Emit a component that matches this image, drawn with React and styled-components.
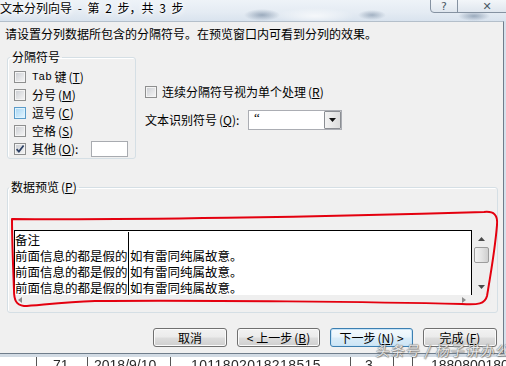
import React from 'react';
import styled, { createGlobalStyle, css } from 'styled-components';

const GlobalStyle = createGlobalStyle`
  html, body { margin: 0; padding: 0; width: 506px; height: 366px; overflow: hidden; }
  body {
    font-family: "Noto Sans CJK SC", "Liberation Sans", sans-serif;
    font-size: 12px;
    color: #000;
    background: #dfe7ef;
  }
`;

const Page = styled.div`
  position: relative;
  width: 506px;
  height: 366px;
  overflow: hidden;
  display: flex;
  flex-direction: column;
  background: linear-gradient(90deg, #e3eaf1, #d6e1ec);
`;

const TitleBar = styled.div`
  position: relative;
  flex: none;
  height: 21px;
  background:
    radial-gradient(ellipse 18px 6px at 262px 15px, rgba(70, 95, 125, 0.45), transparent),
    radial-gradient(ellipse 14px 5px at 372px 15px, rgba(70, 95, 125, 0.4), transparent),
    radial-gradient(ellipse 16px 5px at 474px 16px, rgba(70, 95, 125, 0.45), transparent),
    radial-gradient(ellipse 40px 8px at 315px 16px, rgba(255, 255, 255, 0.7), transparent),
    linear-gradient(180deg, #eef3f8 0%, #e4ebf3 60%, #d9e3ee 100%);
`;

const TitleText = styled.div`
  font-size: 12px;
  line-height: 16px;
  word-spacing: 3px;
  white-space: nowrap;
  text-shadow: 0 0 3px #fff, 0 0 6px #fff, 0 0 8px #fff;
`;

const CaptionBox = styled.div`
  position: absolute;
  left: 430px;
  top: -2px;
  width: 84px;
  height: 13px;
  display: flex;
  border: 1px solid #8592a1;
  border-radius: 0 0 4px 4px;
  background: linear-gradient(#f4f7fa, #dfe6ee);
  overflow: hidden;
`;

const CaptionBtn = styled.div`
  width: ${p => p.$w}px;
  flex: none;
  display: flex;
  justify-content: center;
  align-items: flex-end;
  font-family: "DejaVu Sans", sans-serif;
  font-size: 11px;
  line-height: 11px;
  color: #4c5966;
  & + & { border-left: 1px solid #8592a1; }
`;

const Client = styled.div`
  flex: none;
  width: 503px;
  background: #f0f0f0;
  border-top: 1px solid #b4bfca;
  border-right: 1px solid #6f7d8b;
  border-bottom: 1px solid #6f7d8b;
  display: flex;
  flex-direction: column;
  padding-bottom: 6px;
`;

const Instruction = styled.div`
  margin: 5px 0 0 5px;
  line-height: 14px;
  white-space: nowrap;
`;

const TopRow = styled.div`
  display: flex;
  margin-top: 9px;
  padding-left: 7px;
`;

const GroupBox = styled.fieldset`
  box-sizing: border-box;
  width: ${p => p.$w}px;
  margin: 0;
  padding: 0;
  min-width: 0;
  border: 1px solid #d5dfe5;
  border-radius: 3px;
  box-shadow: inset 1px 1px 0 #fff;
`;

const Legend = styled.legend`
  margin-left: ${p => p.$ml || 2}px;
  padding: 0 2px;
  font-size: 12px;
  line-height: 14px;
`;

const GroupInner = styled.div`
  padding: 4px 7px 0 6px;
`;

const CheckRow = styled.div`
  height: 18px;
  display: flex;
  align-items: center;
  white-space: nowrap;
  line-height: 14px;
`;

const Box = styled.span`
  flex: none;
  position: relative;
  box-sizing: border-box;
  width: 12px;
  height: 12px;
  margin-right: ${p => p.$gap ?? 6}px;
  border: 1px solid #8e8f8f;
  box-shadow: inset 0 0 0 1px #f4f4f4;
  background: linear-gradient(135deg, #c9ccd1 0%, #e3e4e6 55%, #f6f6f6 100%);
  ${p => p.$hover && css`
    border-color: #5b9bc9;
    box-shadow: inset 0 0 0 1px #def3fd;
    background: linear-gradient(135deg, #a6d4f3 0%, #c8e6f9 55%, #e8f6fe 100%);
  `}
  svg { position: absolute; left: 0; top: 0; }
`;

const Mono = styled.span`
  font-family: "Liberation Mono", monospace;
  font-size: 11px;
`;

const Hot = styled.span`
  margin-left: 2px;
  u { text-decoration: underline; text-underline-offset: 1px; }
`;

const OtherInput = styled.span`
  margin-left: auto;
  box-sizing: border-box;
  width: 37px;
  height: 16px;
  background: #fff;
  border: 1px solid #a8abb0;
`;

const RightCol = styled.div`
  margin-left: 9px;
  padding-top: 33px;
  display: flex;
  flex-direction: column;
`;

const ComboRow = styled.div`
  margin-top: 9px;
  height: 20px;
  display: flex;
  align-items: center;
  white-space: nowrap;
`;

const ComboLabel = styled.span`
  width: 103px;
  flex: none;
  line-height: 14px;
`;

const Combo = styled.div`
  box-sizing: border-box;
  width: 94px;
  height: 20px;
  display: flex;
  border: 1px solid #abadb3;
  background: #fff;
`;

const ComboText = styled.span`
  flex: 1;
  padding-left: 5px;
  font-family: "Liberation Serif", serif;
  font-size: 13px;
  line-height: 14px;
`;

const ComboButton = styled.span`
  box-sizing: border-box;
  width: 17px;
  display: flex;
  align-items: center;
  justify-content: center;
  border: 1px solid #8b8e93;
  border-radius: 1px;
  background: linear-gradient(90deg, #f3f3f3, #dcdcdc);
`;

const PreviewGroupWrap = styled.div`
  margin: 21px 0 0 7px;
`;

const PreviewInner = styled.div`
  padding: 36px 6px 8px 6px;
`;

const PreviewBox = styled.div`
  display: grid;
  grid-template-columns: 458px 19px;
  grid-template-rows: 65px 9px;
`;

const DataArea = styled.div`
  box-sizing: border-box;
  background: #fff;
  border: 1px solid #000;
  border-bottom: none;
  overflow: hidden;
  display: grid;
  grid-template-columns: 114px 1fr;
  grid-auto-rows: 16px;
  padding-top: 1px;
  align-content: start;
`;

const Cell = styled.div`
  font-size: 12.5px;
  line-height: 16px;
  white-space: nowrap;
  overflow: hidden;
  ${p => p.$first ? css`border-right: 1px solid #000;` : css`padding-left: 1px;`}
`;

const VScroll = styled.div`
  display: flex;
  flex-direction: column;
  align-items: center;
  background: #eeeeee;
`;

const ArrowCell = styled.div`
  height: 17px;
  flex: none;
  display: flex;
  align-items: center;
  justify-content: center;
`;

const Thumb = styled.div`
  box-sizing: border-box;
  width: 15px;
  height: 16px;
  border: 1px solid #9c9c9c;
  border-radius: 2px;
  background: linear-gradient(90deg, #f4f4f4, #e2e2e2 55%, #cfcfcf);
`;

const Spacer = styled.div`flex: 1;`;

const HScroll = styled.div`
  grid-column: 1 / span 2;
  display: flex;
  justify-content: space-between;
  align-items: flex-start;
  padding: 2px 25px 0 4px;
  background: #efefef;
`;

const ButtonRow = styled.div`
  margin-top: 15px;
  padding-right: 6px;
  display: flex;
  justify-content: flex-end;
  gap: 10px;
`;

const Button = styled.div`
  box-sizing: border-box;
  width: ${p => p.$w}px;
  height: 19px;
  display: flex;
  align-items: center;
  justify-content: center;
  white-space: nowrap;
  line-height: 14px;
  border: 1px solid #707070;
  border-radius: 3px;
  background: linear-gradient(#f2f2f2 0%, #ebebeb 48%, #dddddd 52%, #cfcfcf 100%);
  box-shadow: inset 0 0 0 1px #fbfbfb;
  ${p => p.$focus && css`
    border-color: #3c7fb1;
    background: linear-gradient(#f4fafe 0%, #e9f4fb 48%, #d9ecf8 52%, #cde5f5 100%);
    box-shadow: inset 0 0 0 1px #c6e3f7;
  `}
`;

const BottomStrip = styled.div`
  flex: 1;
  padding-top: 3px;
  background: linear-gradient(#d2dbe4 0 3px, #ffffff 3px);
  overflow: hidden;
`;

const SheetRow = styled.div`
  display: grid;
  grid-template-columns: 36px 51px 83px 180px 43px 19px 1fr;
  height: 20px;
  font-family: "Liberation Sans", sans-serif;
  font-size: 14px;
  line-height: 14px;
  color: #2b2b2b;
  filter: blur(0.4px);
`;

const SheetCell = styled.div`
  border-left: ${p => p.$noline ? 'none' : '1px solid #555'};
  padding: 1px 0 0 ${p => p.$pl || 0}px;
  white-space: nowrap;
  overflow: hidden;
  letter-spacing: ${p => p.$ls || 0}px;
`;

const Watermark = styled.div`
  position: absolute;
  left: 376px;
  top: 341px;
  font-size: 14px;
  line-height: 18px;
  letter-spacing: 1px;
  white-space: nowrap;
  color: rgba(255, 255, 255, 0.85);
  text-shadow: 0 0 1px #6d6d6d, 0 0 1px #6d6d6d, 1px 1px 1px rgba(80, 80, 80, 0.6);
  transform: skewX(-8deg);
  pointer-events: none;
`;

const Annotation = styled.svg`
  position: absolute;
  left: 0;
  top: 0;
  pointer-events: none;
`;

const Check = () => (
  <svg width="10" height="10" viewBox="0 0 10 10">
    <path d="M1.6 5.2 L3.9 7.6 L8.6 1.6" fill="none" stroke="#2b3f63" strokeWidth="1.7" />
  </svg>
);

const Tri = ({ dir = 'down', color = '#333', w = 7, h = 4 }) => {
  let d;
  if (dir === 'down') d = `M0 0 L${w} 0 L${w / 2} ${h} Z`;
  if (dir === 'up') d = `M0 ${h} L${w} ${h} L${w / 2} 0 Z`;
  if (dir === 'left') d = `M${w} 0 L${w} ${h} L0 ${h / 2} Z`;
  if (dir === 'right') d = `M0 0 L0 ${h} L${w} ${h / 2} Z`;
  return (
    <svg width={w} height={h} viewBox={`0 0 ${w} ${h}`}>
      <path d={d} fill={color} />
    </svg>
  );
};

const delimiters = [
  { label: <><Mono>Tab</Mono>&nbsp;键</>, key: 'T' },
  { label: '分号', key: 'M' },
  { label: '逗号', key: 'C', hover: true },
  { label: '空格', key: 'S' },
];

const rows = [
  ['备注', ''],
  ['前面信息的都是假的', '如有雷同纯属故意。'],
  ['前面信息的都是假的', '如有雷同纯属故意。'],
  ['前面信息的都是假的', '如有雷同纯属故意。'],
  ['前面信息的都是假的', '如有雷同纯属故意。'],
];

export default function App() {
  return (
    <>
      <GlobalStyle />
      <Page>
        <TitleBar>
          <TitleText>文本分列向导 - 第 2 步，共 3 步</TitleText>
          <CaptionBox>
            <CaptionBtn $w={26}>?</CaptionBtn>
            <CaptionBtn $w={58}>✕</CaptionBtn>
          </CaptionBox>
        </TitleBar>

        <Client>
          <Instruction>请设置分列数据所包含的分隔符号。在预览窗口内可看到分列的效果。</Instruction>

          <TopRow>
            <GroupBox $w={129}>
              <Legend>分隔符号</Legend>
              <GroupInner>
                {delimiters.map((d, i) => (
                  <CheckRow key={i}>
                    <Box $hover={d.hover} />
                    {d.label}
                    <Hot>(<u>{d.key}</u>)</Hot>
                  </CheckRow>
                ))}
                <CheckRow>
                  <Box><Check /></Box>
                  其他<Hot>(<u>O</u>):</Hot>
                  <OtherInput />
                </CheckRow>
              </GroupInner>
            </GroupBox>

            <RightCol>
              <CheckRow>
                <Box $gap={5} />
                连续分隔符号视为单个处理<Hot>(<u>R</u>)</Hot>
              </CheckRow>
              <ComboRow>
                <ComboLabel>文本识别符号<Hot>(<u>Q</u>):</Hot></ComboLabel>
                <Combo>
                  <ComboText>“</ComboText>
                  <ComboButton><Tri dir="down" color="#111" w={7} h={4} /></ComboButton>
                </Combo>
              </ComboRow>
            </RightCol>
          </TopRow>

          <PreviewGroupWrap>
            <GroupBox $w={491}>
              <Legend $ml={1}>数据预览<Hot>(<u>P</u>)</Hot></Legend>
              <PreviewInner>
                <PreviewBox>
                  <DataArea>
                    {rows.map((r, i) => (
                      <React.Fragment key={i}>
                        <Cell $first>{r[0]}</Cell>
                        <Cell>{r[1]}</Cell>
                      </React.Fragment>
                    ))}
                  </DataArea>
                  <VScroll>
                    <ArrowCell><Tri dir="up" color="#4a4a4a" w={7} h={4} /></ArrowCell>
                    <Thumb />
                    <Spacer />
                    <ArrowCell><Tri dir="down" color="#4a4a4a" w={7} h={4} /></ArrowCell>
                  </VScroll>
                  <HScroll>
                    <Tri dir="left" color="#8c8c8c" w={4} h={6} />
                    <Tri dir="right" color="#8c8c8c" w={4} h={6} />
                  </HScroll>
                </PreviewBox>
              </PreviewInner>
            </GroupBox>
          </PreviewGroupWrap>

          <ButtonRow>
            <Button $w={74}>取消</Button>
            <Button $w={83}>&lt; 上一步<Hot>(<u>B</u>)</Hot></Button>
            <Button $w={83} $focus>下一步<Hot>(<u>N</u>)</Hot>&nbsp;&gt;</Button>
            <Button $w={74}>完成<Hot>(<u>F</u>)</Hot></Button>
          </ButtonRow>
        </Client>

        <BottomStrip>
          <SheetRow>
            <SheetCell $noline />
            <SheetCell $pl={16}>71</SheetCell>
            <SheetCell $pl={6}>2018/9/10</SheetCell>
            <SheetCell $pl={20} $ls={0.4}>1011802018218515</SheetCell>
            <SheetCell $pl={14}>3</SheetCell>
            <SheetCell />
            <SheetCell $pl={18}>1880800180</SheetCell>
          </SheetRow>
        </BottomStrip>

        <Watermark>头条号 / 杨子讲办公</Watermark>

        <Annotation width="506" height="366" viewBox="0 0 506 366">
          <path
            d="M12 219 C 120 220, 320 217, 484 212 C 494 211, 498 215, 497 225 C 495 250, 490 278, 487 296 C 485 304, 478 305, 462 304 C 380 302, 200 300, 95 301 C 60 302, 35 306, 24 306 C 16 305, 14 300, 14 290 C 13 265, 12 240, 12 219"
            fill="none"
            stroke="#e4000f"
            strokeWidth="2"
            strokeLinecap="round"
          />
        </Annotation>
      </Page>
    </>
  );
}
